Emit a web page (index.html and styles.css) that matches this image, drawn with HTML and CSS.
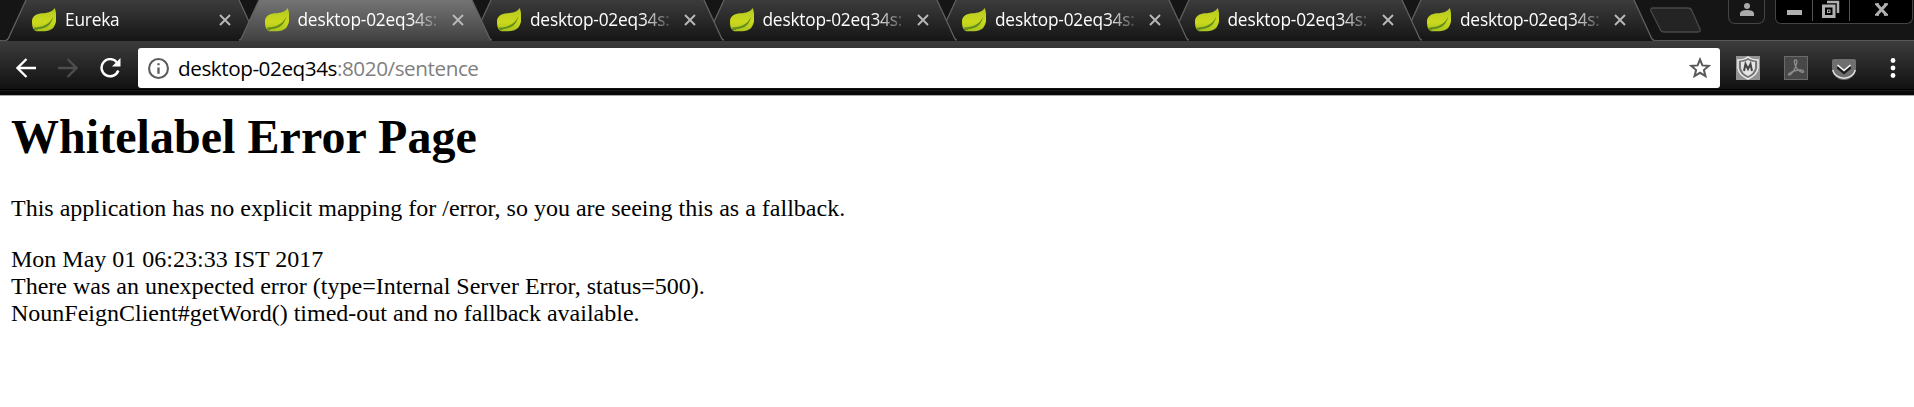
FILE: index.html
```html
<!DOCTYPE html>
<html lang="en">
<head>
<meta charset="utf-8">
<title>Whitelabel Error Page</title>
<link rel="stylesheet" href="styles.css">
</head>
<body>
<svg width="0" height="0" class="defs">
  <defs>
    <linearGradient id="dark" x1="0" y1="0" x2="0" y2="1"><stop offset="0" stop-color="#3c3c3c"/><stop offset="1" stop-color="#151515"/></linearGradient>
    <linearGradient id="light" x1="0" y1="0" x2="0" y2="1"><stop offset="0" stop-color="#747474"/><stop offset="1" stop-color="#414141"/></linearGradient>
    <linearGradient id="leafFill" x1="0" y1="0" x2="0" y2="1"><stop offset="0" stop-color="#b3c922"/><stop offset=".6" stop-color="#ccd91c"/><stop offset="1" stop-color="#a9c41f"/></linearGradient>
    <symbol id="leaf" viewBox="0 0 24 24"><path d="M22.800 0C25 7 25 15 21.500 19.500 17 24.500 9 23 4 23.300 0 21 0 16 0 13.500 0 9 3 6.500 8 5.500 14 5 19 5 22.800 0z" fill="url(#leafFill)"/><path d="M2 19.500c9 0 16-3.500 19-11-1 7.500-6 12-15 12.800-1 2.200-5 1-4-1.800z" fill="#638f1c"/></symbol>
    <symbol id="close" viewBox="0 0 12 12"><path d="M1 1l10 10M11 1L1 11" stroke="#b9b9b9" stroke-width="1.900"/></symbol>
  </defs>
</svg>
<header class="browser">
  <div class="strip">
    <div class="tabs">
      <div class="tab first"><svg class="shape" viewBox="0 0 253 41"><path fill="url(#dark)" d="M0 41Q2 40 3 37L20 0H233L250 37Q251 40 253 41z"/><path class="edge" d="M0 40Q2 40 3 37L20 0M233 0L250 37Q251 40 253 40"/></svg><svg class="leaf"><use href="#leaf"/></svg><span class="label">Eureka</span><svg class="close"><use href="#close"/></svg></div>
      <div class="tab active"><svg class="shape" viewBox="0 0 253 41"><path fill="url(#light)" d="M0 41Q2 40 3 37L20 0H233L250 37Q251 40 253 41z"/><path class="edge" d="M0 40Q2 40 3 37L20 0M233 0L250 37Q251 40 253 40"/></svg><svg class="leaf"><use href="#leaf"/></svg><span class="label">desktop-02eq34s:</span><svg class="close"><use href="#close"/></svg></div>
      <div class="tab third"><svg class="shape" viewBox="0 0 253 41"><path fill="url(#dark)" d="M0 41Q2 40 3 37L20 0H233L250 37Q251 40 253 41z"/><path class="edge" d="M0 40Q2 40 3 37L20 0M233 0L250 37Q251 40 253 40"/></svg><svg class="leaf"><use href="#leaf"/></svg><span class="label">desktop-02eq34s:</span><svg class="close"><use href="#close"/></svg></div>
      <div class="tab fourth"><svg class="shape" viewBox="0 0 253 41"><path fill="url(#dark)" d="M0 41Q2 40 3 37L20 0H233L250 37Q251 40 253 41z"/><path class="edge" d="M0 40Q2 40 3 37L20 0M233 0L250 37Q251 40 253 40"/></svg><svg class="leaf"><use href="#leaf"/></svg><span class="label">desktop-02eq34s:</span><svg class="close"><use href="#close"/></svg></div>
      <div class="tab fifth"><svg class="shape" viewBox="0 0 253 41"><path fill="url(#dark)" d="M0 41Q2 40 3 37L20 0H233L250 37Q251 40 253 41z"/><path class="edge" d="M0 40Q2 40 3 37L20 0M233 0L250 37Q251 40 253 40"/></svg><svg class="leaf"><use href="#leaf"/></svg><span class="label">desktop-02eq34s:</span><svg class="close"><use href="#close"/></svg></div>
      <div class="tab sixth"><svg class="shape" viewBox="0 0 253 41"><path fill="url(#dark)" d="M0 41Q2 40 3 37L20 0H233L250 37Q251 40 253 41z"/><path class="edge" d="M0 40Q2 40 3 37L20 0M233 0L250 37Q251 40 253 40"/></svg><svg class="leaf"><use href="#leaf"/></svg><span class="label">desktop-02eq34s:</span><svg class="close"><use href="#close"/></svg></div>
      <div class="tab"><svg class="shape" viewBox="0 0 253 41"><path fill="url(#dark)" d="M0 41Q2 40 3 37L20 0H233L250 37Q251 40 253 41z"/><path class="edge" d="M0 40Q2 40 3 37L20 0M233 0L250 37Q251 40 253 40"/></svg><svg class="leaf"><use href="#leaf"/></svg><span class="label">desktop-02eq34s:</span><svg class="close"><use href="#close"/></svg></div>
    </div>
    <svg class="newtab" viewBox="0 0 52 27"><path d="M3 1H38Q41 1 42 4L50 22Q51 25 48 25H14Q11 25 10 22L1 4Q0 1 3 1z" fill="#242424" stroke="#484848" stroke-width="1.300"/></svg>
    <div class="window-controls">
      <div class="user"><svg width="14" height="13" viewBox="0 0 14 13"><circle cx="7" cy="3" r="3" fill="#aaa"/><path d="M0 13V10Q1 7 7 7t7 3v3z" fill="#aaa"/></svg></div>
      <div class="buttons">
        <div class="min"><i></i></div>
        <div class="restore"><svg width="18" height="18" viewBox="0 0 18 18" fill="none" stroke="#b0b0b0"><path d="M5 2H16V13" stroke-width="2.500"/><rect x="1.500" y="6" width="10.500" height="10.500" stroke-width="3"/><rect x="5.500" y="10" width="2.500" height="2.500" stroke-width="1"/></svg></div>
        <div class="quit"><svg width="15" height="13" viewBox="0 0 15 13"><path d="M2.500 1L12.500 12M12.500 1L2.500 12" stroke="#b0b0b0" stroke-width="3"/><path d="M1 1.200H5M10 1.200H14M1 11.800H5M10 11.800H14" stroke="#b0b0b0" stroke-width="1.800"/></svg></div>
      </div>
    </div>
  </div>
  <div class="toolbar">
    <svg class="nav back" viewBox="0 0 20 20"><path d="M20 10H2M10.500 1L1.500 10l9 9" fill="none" stroke="#fff" stroke-width="2.300"/></svg>
    <svg class="nav forward" viewBox="0 0 20 20"><path d="M0 10H18M9.500 1l9 9-9 9" fill="none" stroke="#4d4d4d" stroke-width="2.300"/></svg>
    <svg class="nav reload" viewBox="0 0 21 20"><path d="M17 4.500A8.600 8.600 0 1 0 18.300 12.500" fill="none" stroke="#fff" stroke-width="2.500"/><path d="M20.500 0V8.500H12z" fill="#fff"/></svg>
    <div class="omnibox">
      <svg class="info" viewBox="0 0 20 20"><circle cx="10" cy="10" r="9" fill="none" stroke="#5c5c5c" stroke-width="2"/><path d="M10 5V7M10 9V15" stroke="#5c5c5c" stroke-width="2.200"/></svg>
      <div class="url">desktop-02eq34s<span>:8020/sentence</span></div>
      <svg class="star" viewBox="0 0 22 22"><path d="M11 2.500l2.400 5.900 6.400.5-4.900 4.100 1.600 6.200L11 15.800l-5.500 3.400 1.600-6.200L2.200 8.900l6.400-.5z" fill="none" stroke="#5a5a5a" stroke-width="2"/></svg>
    </div>
    <svg class="ext shield" viewBox="0 0 24 24"><rect width="24" height="24" fill="#929292"/><path d="M2 4Q8 4 12 1 16 4 22 4V12Q21 19 12 23 3 19 2 12z" fill="#777" stroke="#eee" stroke-width="1.500"/><path d="M5 6Q9 6 12 4 15 6 19 6V12Q18 17 12 20 6 17 5 12z" fill="#e5e5e5"/><path d="M8 15L9.500 8 12 13 14.500 8 16 15" fill="none" stroke="#444" stroke-width="2"/></svg>
    <svg class="ext pdf" viewBox="0 0 24 24"><rect x=".5" y=".5" width="23" height="23" fill="#484848" stroke="#6a6a6a"/><path d="M11.500 4C14 4 12.500 8 11.500 11 10 15 7 19 5 19 3 18 8 15.500 12 14.500 16 13.500 20 14 19.500 16 18 17.500 13.500 14 12 11 10.500 8 9.500 4 11.500 4z" fill="none" stroke="#8a8a8a" stroke-width="1.400"/></svg>
    <svg class="ext pocket" viewBox="0 0 24 24"><path d="M0 5Q0 3 2 3H22Q24 3 24 5V12A12 12 0 0 1 0 12z" fill="#6f6f6f"/><path d="M.7 14A11.500 10 0 0 0 23.300 14" fill="none" stroke="#ddd" stroke-width="1.500"/><path d="M5.500 11l6.500 5.500 6.500-5.500" fill="none" stroke="#1c1c1c" stroke-width="3"/><path d="M5.500 9l6.500 5.500L18.500 9" fill="none" stroke="#fff" stroke-width="1.500"/></svg>
    <svg class="menu" viewBox="0 0 6 20"><g fill="#fff"><circle cx="3" cy="2.500" r="2.400"/><circle cx="3" cy="10" r="2.400"/><circle cx="3" cy="17.500" r="2.400"/></g></svg>
  </div>
</header>
<main class="page">
  <h1>Whitelabel Error Page</h1>
  <p>This application has no explicit mapping for /error, so you are seeing this as a fallback.</p>
  <div>Mon May 01 06:23:33 IST 2017</div>
  <div>There was an unexpected error (type=Internal Server Error, status=500).</div>
  <div>NounFeignClient#getWord() timed-out and no fallback available.</div>
</main>
</body>
</html>
```
FILE: styles.css
```css
* { box-sizing: border-box; }
body { margin: 0; height: 407px; overflow: hidden; background: #fff; color: #000; }
svg { display: block; flex: none; }
.defs { position: absolute; }
.browser { font-family: "Open Sans", "Noto Sans", sans-serif; height: 96px; border-bottom: 1px solid #a9a9a9; }
.strip { display: flex; height: 40px; background: #151515; padding-left: 6px; }
.tabs { display: flex; padding-right: 20px; isolation: isolate; }
.tab { position: relative; display: flex; align-items: center; width: 252.500px; margin-right: -20px; height: 40px; padding-left: 26px; flex: none; }
.shape { position: absolute; left: 0; top: 0; width: 253px; height: 41px; }
.edge { fill: none; stroke: #606060; stroke-width: 1.300; }
.first { z-index: 6; }
.active { z-index: 7; }
.third { z-index: 5; }
.fourth { z-index: 4; }
.fifth { z-index: 3; }
.sixth { z-index: 2; }
.leaf { position: relative; width: 24px; height: 24px; }
.label { position: relative; width: 143px; margin-left: 9px; white-space: nowrap; color: #fff; font-size: 17.300px; letter-spacing: -.2px; line-height: 24px; -webkit-mask-image: linear-gradient(90deg, #000 112px, transparent 145px); mask-image: linear-gradient(90deg, #000 112px, transparent 145px); }
.close { position: relative; width: 12px; height: 12px; margin-left: 11px; }
.newtab { width: 52px; height: 27px; margin: 7px 0 0 -4px; }
.window-controls { display: flex; margin-left: auto; }
.user { width: 37px; height: 24px; margin-right: 10px; border: 1px solid #444; border-top: 0; border-radius: 0 0 7px 7px; display: flex; justify-content: center; padding-top: 3px; }
.buttons { display: flex; width: 138px; height: 24px; margin-right: 1px; background: #000; border: 1px solid #444; border-top: 0; border-radius: 0 0 6px 6px; }
.buttons > div { display: flex; justify-content: center; height: 21px; }
.min { width: 37px; border-right: 1px solid #555; align-items: flex-end; padding-bottom: 6px; }
.min i { width: 15px; height: 5px; background: #b0b0b0; }
.restore { width: 37px; border-right: 1px solid #555; }
.quit { flex: 1; padding-top: 3px; }
.toolbar { display: flex; align-items: center; height: 55px; padding-bottom: 7px; border-top: 1px solid #575757; background: linear-gradient(#0000 48px, #000 48px, #000 49px, #1d1d1d 49px, #1d1d1d 50px, #090909 50px), linear-gradient(#3c3c3c, #121212 47px); }
.nav { height: 20px; width: 20px; }
.back { margin-left: 16px; }
.forward { margin-left: 22px; }
.reload { width: 21px; margin-left: 22px; }
.omnibox { display: flex; align-items: center; width: 1582px; height: 40px; margin: 7px 0 0 17px; padding: 0 9px 0 10px; border-radius: 3px; background: #fff; }
.info { width: 21px; height: 21px; }
.url { margin-left: 9px; font-size: 20.700px; letter-spacing: -.44px; line-height: 30px; white-space: nowrap; }
.url span { color: #808080; }
.star { width: 22px; height: 22px; margin-left: auto; }
.ext { width: 24px; height: 24px; }
.shield { margin-left: 16px; }
.pdf, .pocket { margin-left: 24px; }
.menu { width: 6px; height: 20px; margin-left: 34px; }
.nav, .ext, .menu { margin-top: 7px; }
.page { padding: 0 12px 0 11px; font: 24px/27px "Liberation Serif", "Times New Roman", serif; }
.page h1 { margin: 14px 0 31px; font-size: 48px; letter-spacing: .05px; line-height: 54px; }
.page p { margin: 0 0 24px; }
```
